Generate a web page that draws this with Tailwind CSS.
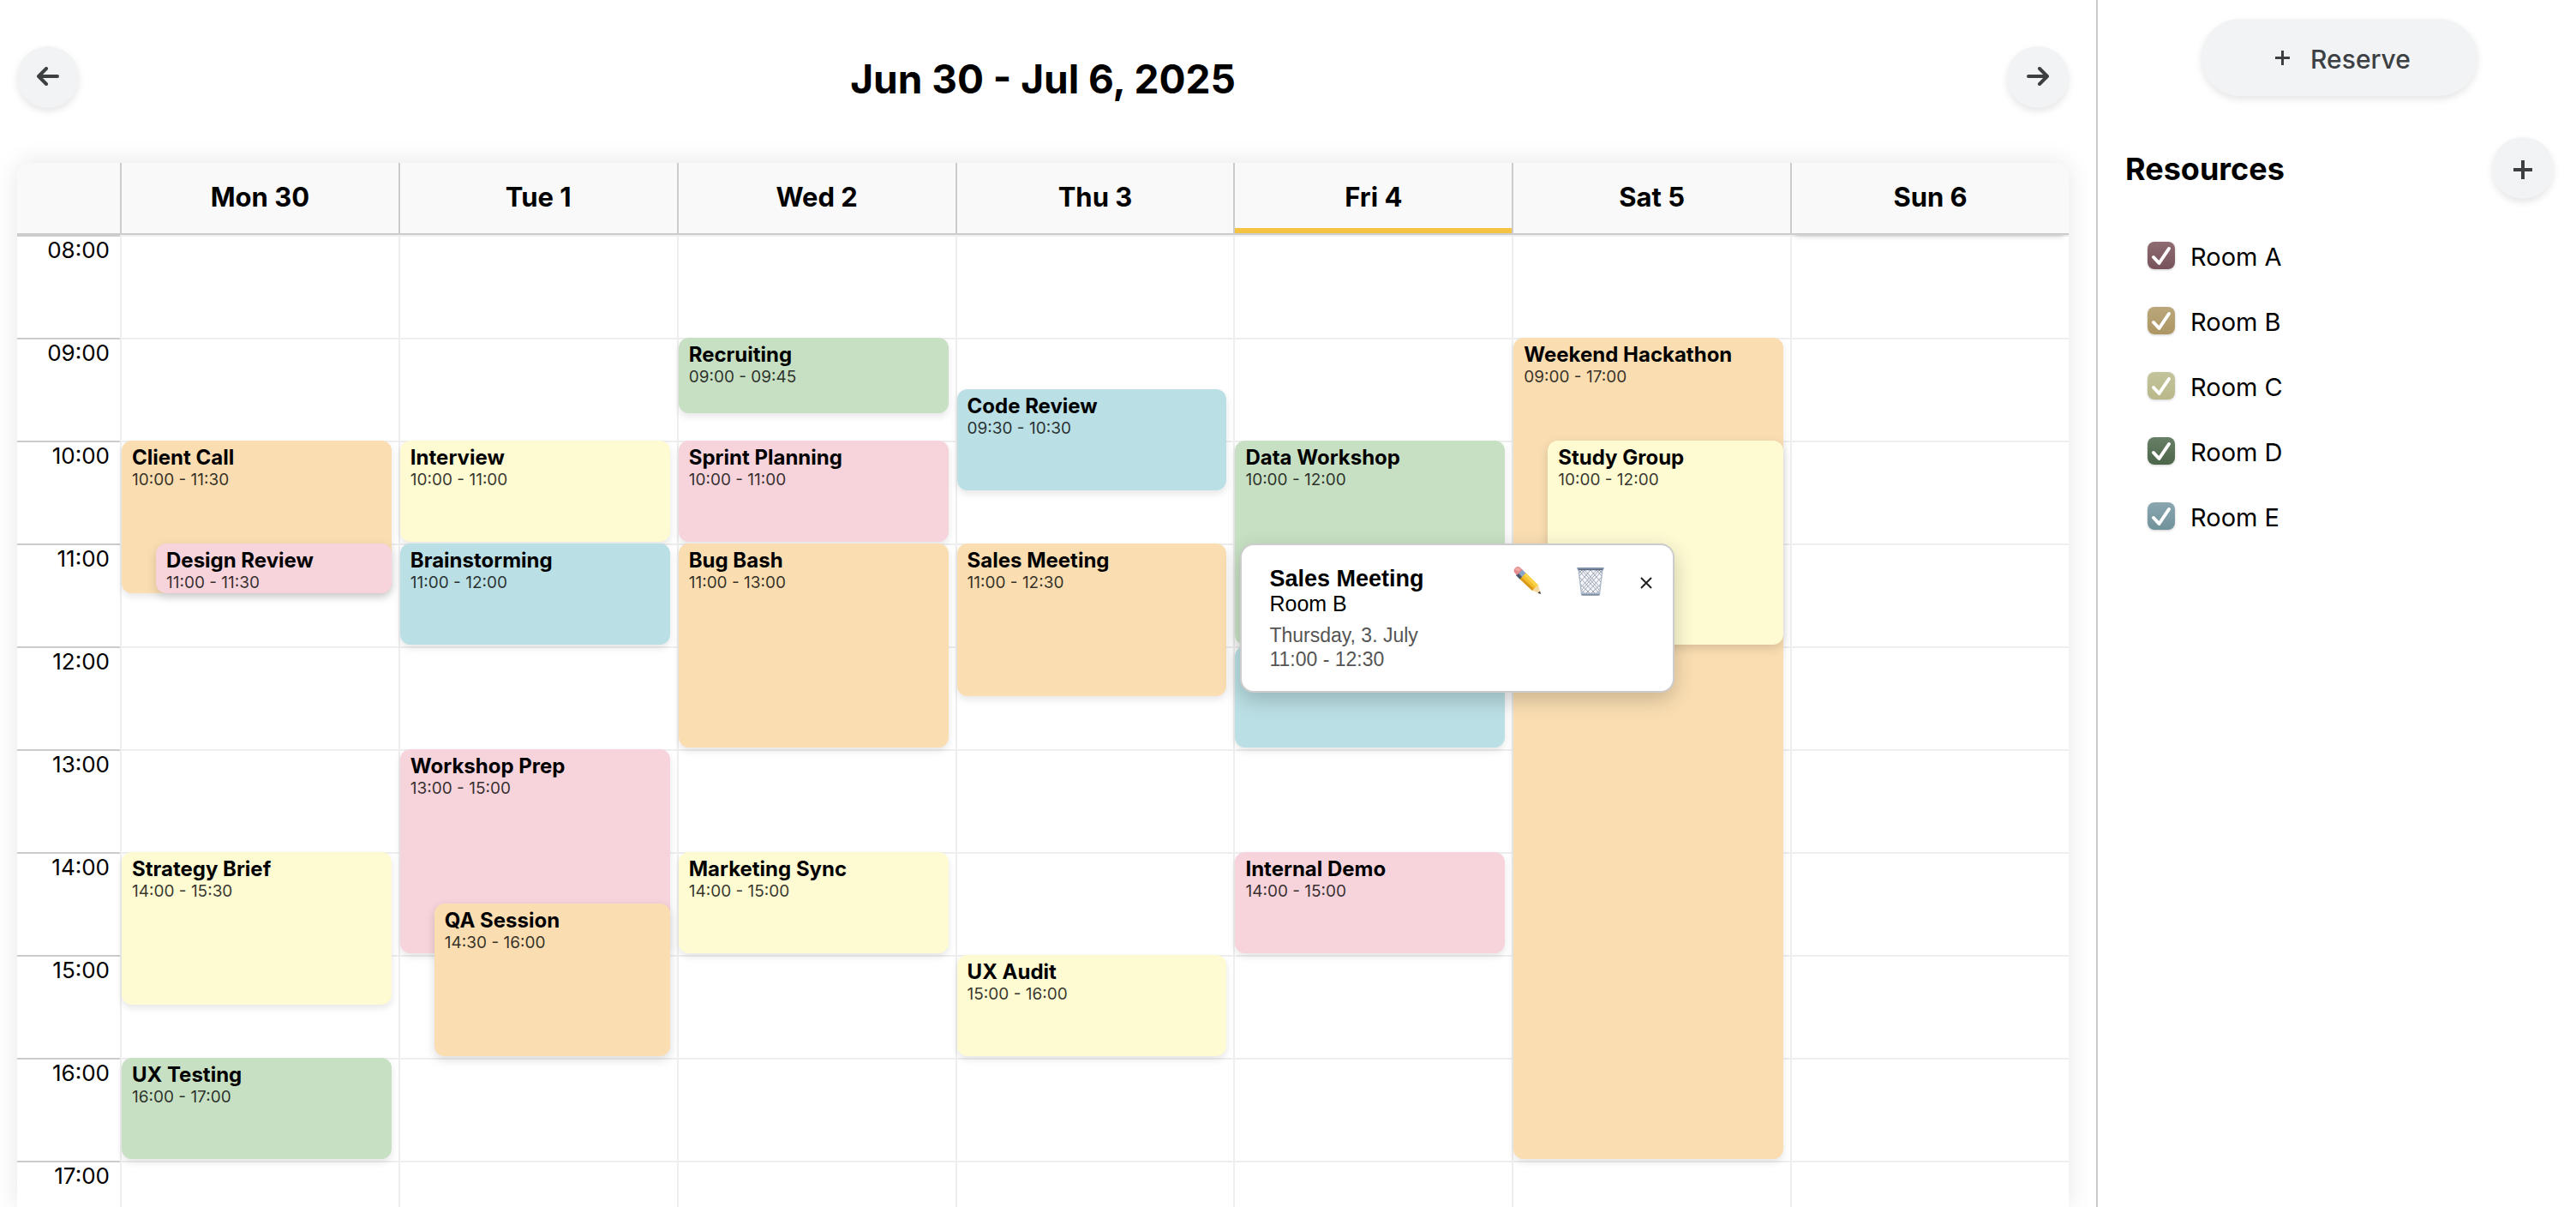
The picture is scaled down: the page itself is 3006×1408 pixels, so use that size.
<!doctype html>
<html lang="en">
<head>
<meta charset="utf-8">
<title>Room calendar</title>
<script src="https://cdn.jsdelivr.net/npm/@tailwindcss/browser@4"></script>
</head>
<body class="flex h-screen overflow-hidden bg-white font-['Inter',sans-serif] text-black">
<main class="flex min-w-0 flex-1 flex-col pl-5 pr-8">
  <header class="flex h-[190px] shrink-0 items-start justify-between pt-[54px]">
    <button aria-label="Previous week" class="flex size-[72px] items-center justify-center rounded-full bg-[#f1f3f4] pb-0.5 text-[#3c4043] shadow-[0_4px_8px_rgba(0,0,0,0.1)]">
      <svg width="26" height="22" viewBox="0 0 26 22" fill="none" stroke="currentColor" stroke-width="4" stroke-linecap="round" stroke-linejoin="round"><path d="M24 11H2.5M11 2 2 11l9 9"/></svg>
    </button>
    <h1 class="pt-0.5 text-[46px] font-bold leading-[72px]">Jun 30 - Jul 6, 2025</h1>
    <button aria-label="Next week" class="flex size-[72px] items-center justify-center rounded-full bg-[#f1f3f4] pb-0.5 text-[#3c4043] shadow-[0_4px_8px_rgba(0,0,0,0.1)]">
      <svg width="26" height="22" viewBox="0 0 26 22" fill="none" stroke="currentColor" stroke-width="4" stroke-linecap="round" stroke-linejoin="round"><path d="M2 11h21.500M15 2l9 9-9 9"/></svg>
    </button>
  </header>

  <section class="flex min-h-0 flex-1 flex-col rounded-t-2xl shadow-[0_0_30px_rgba(0,0,0,0.1)]">
    <div id="days" class="relative z-10 grid h-[84px] shrink-0 grid-cols-[120px_repeat(7,minmax(0,1fr))] rounded-t-2xl bg-[#f9f9f9] text-[31px] font-bold">
      <div class="border-b-2 border-[#ccc]"></div>
    </div>
    <div id="grid" class="relative grid min-h-0 flex-1 grid-cols-[120px_repeat(7,minmax(0,1fr))] bg-white">
      <div id="hours" class="h-0 text-right text-[26px] leading-8"></div>
    </div>
  </section>
</main>

<aside class="flex w-[560px] shrink-0 flex-col border-l-2 border-[#ccc] pl-8 pr-[26px] pt-[22px]">
  <button class="flex h-[90px] w-[322px] items-center justify-center gap-6 self-center rounded-full bg-[#f1f3f4] pl-2 text-[30px] font-medium text-[#3c4043] shadow-[0_4px_8px_rgba(0,0,0,0.1)]">
    <svg width="17" height="17" viewBox="0 0 17 17" stroke="currentColor" stroke-width="3"><path d="M0 8.500h17M8.500 0v17"/></svg>
    <span class="pt-1">Reserve</span>
  </button>
  <div class="mt-12 flex items-center justify-between">
    <h2 class="pt-0.5 text-[36px] font-bold">Resources</h2>
    <button aria-label="Add resource" class="flex size-[72px] items-center justify-center rounded-full bg-[#f1f3f4] pt-1 text-[#3c4043] shadow-[0_4px_8px_rgba(0,0,0,0.1)]">
      <svg width="22" height="22" viewBox="0 0 22 22" stroke="currentColor" stroke-width="4"><path d="M0 11h22M11 0v22"/></svg>
    </button>
  </div>
  <div id="rooms" class="mt-7 flex flex-col pl-[26px] text-[29px]"></div>
</aside>

<script>
const DAYS = ['Mon 30', 'Tue 1', 'Wed 2', 'Thu 3', 'Fri 4', 'Sat 5', 'Sun 6'];
const TODAY = 4, FIRST_HOUR = 8, HOUR_HEIGHT = 120;
const COLORS = { A: 'bg-[#f7d3db]', B: 'bg-[#fadeb2]', C: 'bg-[#fefad2]', D: 'bg-[#c7e0c3]', E: 'bg-[#badfe4]' };
const EVENTS = [
  [0, 'Client Call', '10:00', '11:30', 'B'],
  [0, 'Design Review', '11:00', '11:30', 'A', 1],
  [0, 'Strategy Brief', '14:00', '15:30', 'C'],
  [0, 'UX Testing', '16:00', '17:00', 'D'],
  [1, 'Interview', '10:00', '11:00', 'C'],
  [1, 'Brainstorming', '11:00', '12:00', 'E'],
  [1, 'Workshop Prep', '13:00', '15:00', 'A'],
  [1, 'QA Session', '14:30', '16:00', 'B', 1],
  [2, 'Recruiting', '09:00', '09:45', 'D'],
  [2, 'Sprint Planning', '10:00', '11:00', 'A'],
  [2, 'Bug Bash', '11:00', '13:00', 'B'],
  [2, 'Marketing Sync', '14:00', '15:00', 'C'],
  [3, 'Code Review', '09:30', '10:30', 'E'],
  [3, 'Sales Meeting', '11:00', '12:30', 'B'],
  [3, 'UX Audit', '15:00', '16:00', 'C'],
  [4, 'Data Workshop', '10:00', '12:00', 'D'],
  [4, '', '12:00', '13:00', 'E'],
  [4, 'Internal Demo', '14:00', '15:00', 'A'],
  [5, 'Weekend Hackathon', '09:00', '17:00', 'B'],
  [5, 'Study Group', '10:00', '12:00', 'C', 1],
];
const ROOMS = [
  ['A', 'from-[#8f6c72] to-[#76525a]'],
  ['B', 'from-[#b9a77b] to-[#ad9662]'],
  ['C', 'from-[#c4c49c] to-[#b8b88a]'],
  ['D', 'from-[#677f66] to-[#4c664a]'],
  ['E', 'from-[#8aa7b0] to-[#71919b]'],
];
const toHours = t => { const [h, m] = t.split(':').map(Number); return h + m / 60 - FIRST_HOUR; };

document.getElementById('days').innerHTML += DAYS.map((d, i) => `
  <div class="flex flex-col border-b-2 border-l-2 border-[#ccc] ${i === 6 ? 'shadow-[0_8px_6px_-6px_rgba(0,0,0,0.15)]' : ''}">
    <div class="flex flex-1 items-center justify-center ${i === TODAY ? 'pt-1' : 'pb-0.5'}">${d}</div>
    ${i === TODAY ? '<div class="h-1.5 bg-[#f5c242]"></div>' : ''}
  </div>`).join('');

const hours = Array.from({ length: 10 }, (_, i) => String(i + FIRST_HOUR).padStart(2, '0') + ':00');
document.getElementById('hours').innerHTML = hours.map(h =>
  `<div class="h-[120px] border-t-2 border-[#ccc] pr-3">${h}</div>`).join('');

const eventHtml = ([, title, from, to, room, depth]) => `
  <button class="absolute right-2 flex flex-col items-start overflow-hidden rounded-xl px-3 pt-1.5 text-left ${COLORS[room]} ${depth ? 'left-10 shadow-[0_4px_12px_rgba(0,0,0,0.15)]' : 'left-0 shadow-[0_4px_8px_rgba(0,0,0,0.1)]'}"
    style="top:${toHours(from) * HOUR_HEIGHT}px;height:${(toHours(to) - toHours(from)) * HOUR_HEIGHT - 2}px">
    ${title ? `<span class="text-[24px] font-bold leading-7">${title}</span><span class="text-[19px] leading-6 text-black/80">${from} - ${to}</span>` : ''}
  </button>`;
document.getElementById('grid').innerHTML += DAYS.map((_, day) => `
  <div class="relative h-full border-l-2 border-[#eee]">
    <div class="h-full overflow-hidden">${hours.map(() => '<div class="h-[120px] border-t-2 border-[#eee]"></div>').join('')}</div>
    ${EVENTS.filter(e => e[0] === day).map(eventHtml).join('')}
    ${day === 3 ? `
    <div role="dialog" aria-label="Sales Meeting" class="absolute left-full top-[360px] z-20 ml-2 flex h-[174px] w-[507px] justify-between rounded-2xl border-2 border-[#ccc] bg-white pl-8 pr-6 pt-[25px] font-['Liberation_Sans',sans-serif] shadow-[0_8px_24px_rgba(0,0,0,0.2)]">
      <div>
        <h3 class="text-[27px] font-bold leading-7">Sales Meeting</h3>
        <p class="text-[25px] leading-[30px]">Room B</p>
        <p class="mt-2 text-[23px] leading-7 text-[#555]">Thursday, 3. July<br>11:00 - 12:30</p>
      </div>
      <div class="flex items-start">
        <button aria-label="Edit" class="mr-[42px]">
          <svg width="32" height="32" viewBox="0 0 32 32">
            <path d="M7 14 14 7 29 21.500 22 28Z" fill="#f5bd2c"/><path d="M11.500 9.500 14 7 29 21.500 26.500 24Z" fill="#fbd34b"/><path d="M7 14 9 12 24.200 26 22 28Z" fill="#d99a1c"/>
            <path d="M22 28 29 21.500 31.800 31.800Z" fill="#f3d9a0"/><path d="m28.500 30.800 2.600-2 .900 3.200Z" fill="#333"/>
            <path d="M3 10 10 3 14.500 7.500 7.500 14.500Z" fill="#8aa5c4"/><path d="M3 10 5.500 7.500 10 12 7.500 14.500Z" fill="#4a5566"/>
            <path d="M1 6.500C-.500 3 3-.500 6.500 0L10.500 3.500 4 10Z" fill="#e58a8c"/><path d="M2 3.500C3 1.500 5 .800 6.500 1.500L8.500 3 6 5.500Z" fill="#f2aaa9"/>
          </svg>
        </button>
        <button aria-label="Delete" class="mr-[42px]">
          <svg width="32" height="34" viewBox="0 0 32 34">
            <path d="M1.500 3h29L27 32H5Z" fill="#f4f6f9"/>
            <path d="m2 8 4-4 20 23M2 4l24 27M9 4l18 20M16 4l12 14M23 4l6 7M3 12l18 19M4 20l11 11M5 27l4 4M30 8l-4-4L6 27M30 4 6 31M23 4 5 24M16 4 4 18M9 4 3 11M29 12 11 31M28 20 17 31M27 27l-4 4" stroke="#8b96a5" stroke-width=".8" fill="none"/>
            <path d="M2 3 5.500 32M30 3l-3.500 29" stroke="#a9b6c6" stroke-width="1.300"/>
            <path d="M.500 1h31v2.500H.500Z" fill="#7e90aa"/><path d="M2 3.200h28v1H2Z" fill="#465468"/>
            <path d="M5 30.500h22L26.500 33.500h-21Z" fill="#a5b4c8"/><path d="M5.500 33h21" stroke="#5d6b7e"/>
          </svg>
        </button>
        <button aria-label="Close" class="mt-3">
          <svg width="14" height="14" viewBox="0 0 14 14" stroke="#222" stroke-width="2"><path d="m1 1 12 12M13 1 1 13"/></svg>
        </button>
      </div>
    </div>` : ''}
  </div>`).join('');

document.getElementById('rooms').innerHTML = ROOMS.map(([name, fill]) => `
  <label class="flex h-[76px] items-center gap-[18px]">
    <span class="relative size-8">
      <input type="checkbox" checked class="block size-8 appearance-none rounded-lg bg-linear-to-b shadow-[0_1px_3px_rgba(0,0,0,0.2)] ${fill}">
      <svg class="pointer-events-none absolute inset-0" width="32" height="32" viewBox="0 0 32 32" fill="none" stroke="#fff" stroke-width="4" stroke-linecap="round" stroke-linejoin="round"><path d="m7 18 6.500 7L25 8"/></svg>
    </span>
    <span class="pt-1">Room ${name}</span>
  </label>`).join('');
</script>
</body>
</html>
